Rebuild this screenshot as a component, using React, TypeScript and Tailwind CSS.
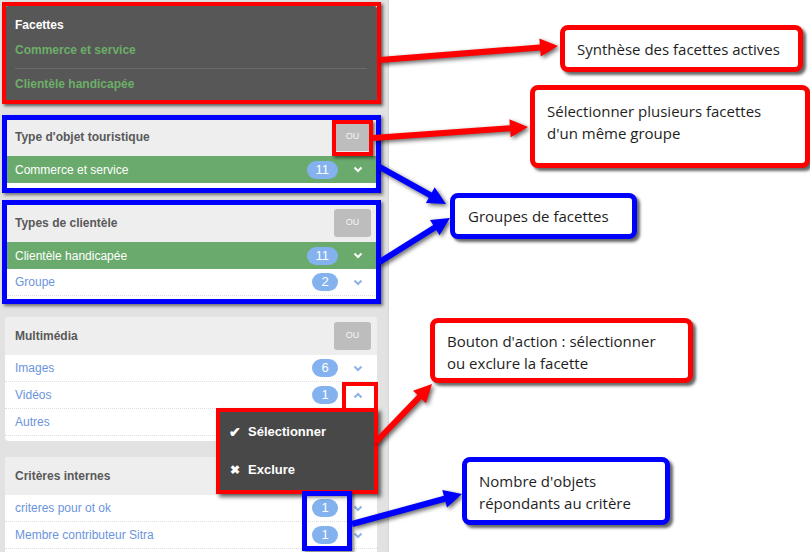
import React from "react";

type Item = { label: string; count?: number; active?: boolean; open?: boolean };
type Group = { title: string; items: Item[] };

const groups: Group[] = [
  { title: "Type d'objet touristique", items: [{ label: "Commerce et service", count: 11, active: true }] },
  {
    title: "Types de clientèle",
    items: [
      { label: "Clientèle handicapée", count: 11, active: true },
      { label: "Groupe", count: 2 },
    ],
  },
  {
    title: "Multimédia",
    items: [
      { label: "Images", count: 6 },
      { label: "Vidéos", count: 1, open: true },
      { label: "Autres" },
    ],
  },
  {
    title: "Critères internes",
    items: [
      { label: "criteres pour ot ok", count: 1 },
      { label: "Membre contributeur Sitra", count: 1 },
    ],
  },
];

function Chevron({ up, color }: { up?: boolean; color: string }) {
  return (
    <svg width="10" height="7" viewBox="0 0 10 7">
      <polyline
        points={up ? "1.5,5.5 5,2 8.5,5.5" : "1.5,1.5 5,5 8.5,1.5"}
        fill="none"
        stroke={color}
        strokeWidth="2"
      />
    </svg>
  );
}

function FacetRow({ item }: { item: Item }) {
  return (
    <div
      className={`h-[27px] flex items-center pl-[10px] text-[12px] ${
        item.active ? "bg-[#6aaa6c] text-white" : "text-[#6c94dc] border-b border-dotted border-[#dddddd]"
      }`}
    >
      <span className="flex-1">{item.label}</span>
      {item.count !== undefined && (
        <span className="h-[18px] min-w-[26px] px-[9px] rounded-full bg-[#84b2ee] text-white text-[13px] leading-[18px] text-center">
          {item.count}
        </span>
      )}
      {item.open !== undefined || item.count !== undefined ? (
        <span className="w-[39px] flex justify-center">
          <Chevron up={item.open} color={item.active ? "#ffffff" : "#8fb2e8"} />
        </span>
      ) : null}
    </div>
  );
}

function FacetGroup({ group }: { group: Group }) {
  return (
    <div className="w-[372px] bg-white rounded-[4px] pb-[5px] shrink-0">
      <div className="h-[38px] bg-[#eeeeee] rounded-t-[4px] flex items-center justify-between pl-[10px] pr-[6px]">
        <span className="text-[12px] font-bold text-[#595959]">{group.title}</span>
        <span className="w-[37px] h-[28px] rounded-[3px] bg-[#bdbdbd] text-[#f5f5f5] text-[9px] flex items-center justify-center">
          OU
        </span>
      </div>
      {group.items.map((item) => (
        <FacetRow key={item.label} item={item} />
      ))}
    </div>
  );
}

function arrow(x1: number, y1: number, x2: number, y2: number, w = 6, hl = 18, hw = 18) {
  const len = Math.hypot(x2 - x1, y2 - y1);
  const ux = (x2 - x1) / len;
  const uy = (y2 - y1) / len;
  const nx = -uy;
  const ny = ux;
  const bx = x2 - ux * hl;
  const by = y2 - uy * hl;
  const pts = [
    [x1 + (nx * w) / 2, y1 + (ny * w) / 2],
    [bx + (nx * w) / 2, by + (ny * w) / 2],
    [bx + (nx * hw) / 2, by + (ny * hw) / 2],
    [x2, y2],
    [bx - (nx * hw) / 2, by - (ny * hw) / 2],
    [bx - (nx * w) / 2, by - (ny * w) / 2],
    [x1 - (nx * w) / 2, y1 - (ny * w) / 2],
  ];
  return pts.map((p) => p.join(",")).join(" ");
}

const arrows = [
  { from: [380, 60], to: [558, 46], color: "#ff0000" },
  { from: [373, 138], to: [528, 127], color: "#ff0000" },
  { from: [378, 166], to: [446, 204], color: "#0000ff" },
  { from: [378, 263], to: [450, 218], color: "#0000ff" },
  { from: [376, 442], to: [432, 384], color: "#ff0000" },
  { from: [352, 524], to: [462, 494], color: "#0000ff" },
];

function Callout({ className, children }: { className: string; children: React.ReactNode }) {
  return (
    <div
      className={`absolute bg-white border-[5px] rounded-[8px] shadow-[3px_3px_3px_rgba(0,0,0,0.6)] text-[15px] leading-[22px] text-[#1e1e1e] font-['Open_Sans','Noto_Sans',sans-serif] ${className}`}
    >
      {children}
    </div>
  );
}

export default function App() {
  return (
    <div className="relative w-[810px] h-[552px] bg-white overflow-hidden flex font-['Liberation_Sans',Arial,sans-serif]">
      <div className="w-[389px] h-[552px] bg-[#e2e2e2] border-r border-[#d6d6d6] pt-[6px] pl-[5px] flex flex-col gap-[16px] overflow-hidden shrink-0">
        <div className="w-[372px] h-[96px] bg-[#575757] rounded-[3px] px-[10px] pt-[11px] shrink-0 text-[12px] font-bold">
          <div className="h-[16px] leading-[16px] text-white">Facettes</div>
          <div className="mt-[9px] h-[16px] leading-[16px] text-[#6cae68]">Commerce et service</div>
          <div className="mt-[10px] h-px bg-[#6b6b6b]" />
          <div className="mt-[7px] h-[16px] leading-[16px] text-[#6cae68]">Clientèle handicapée</div>
        </div>
        {groups.map((g) => (
          <FacetGroup key={g.title} group={g} />
        ))}
      </div>

      {/* dropdown of the "Vidéos" action button */}
      <div className="absolute left-[216px] top-[408px] w-[162px] h-[86px] bg-[#484848] border-4 border-[#ff0000] shadow-[3px_3px_4px_rgba(0,0,0,0.6)] text-white font-bold text-[13px]">
        <div className="flex items-center gap-[5px] pl-[9px] mt-[12px] h-[16px]">
          <span className="text-[14px] w-[14px] leading-[16px]">✔</span>
          <span>Sélectionner</span>
        </div>
        <div className="flex items-center gap-[6px] pl-[10px] mt-[22px] h-[16px]">
          <span className="text-[12px] w-[12px] leading-[16px]">✖</span>
          <span>Exclure</span>
        </div>
      </div>

      {/* annotation frames */}
      <div className="absolute left-[2px] top-[2px] w-[379px] h-[102px] border-4 border-[#ff0000] shadow-[2px_2px_3px_rgba(0,0,0,0.6)]" />
      <div className="absolute left-[332px] top-[120px] w-[41px] h-[36px] border-4 border-[#ff0000] shadow-[2px_2px_3px_rgba(0,0,0,0.5)]" />
      <div className="absolute left-[2px] top-[115px] w-[379px] h-[78px] border-[5px] border-[#0000ff] shadow-[2px_2px_3px_rgba(0,0,0,0.5)]" />
      <div className="absolute left-[2px] top-[200px] w-[379px] h-[104px] border-[5px] border-[#0000ff] shadow-[2px_2px_3px_rgba(0,0,0,0.5)]" />
      <div className="absolute left-[342px] top-[382px] w-[36px] h-[30px] border-4 border-b-0 border-[#ff0000]" />
      <div className="absolute left-[302px] top-[491px] w-[50px] h-[60px] border-[5px] border-[#0000ff] shadow-[2px_2px_3px_rgba(0,0,0,0.5)]" />

      <svg className="absolute left-0 top-0 pointer-events-none" width="810" height="552">
        {arrows.map((a, i) => (
          <polygon
            key={i}
            points={arrow(a.from[0], a.from[1], a.to[0], a.to[1])}
            fill={a.color}
            className="drop-shadow-[2px_2px_2px_rgba(0,0,0,0.6)]"
          />
        ))}
      </svg>

      <Callout className="left-[560px] top-[25px] w-[243px] h-[47px] border-[#ff0000] pl-[12px] flex items-center">
        Synthèse des facettes actives
      </Callout>
      <Callout className="left-[530px] top-[85px] w-[280px] h-[83px] border-[#ff0000] pl-[12px] pt-[10px]">
        Sélectionner plusieurs facettes
        <br />
        d'un même groupe
      </Callout>
      <Callout className="left-[450px] top-[193px] w-[187px] h-[46px] border-[#0000ff] pl-[13px] flex items-center">
        Groupes de facettes
      </Callout>
      <Callout className="left-[430px] top-[318px] w-[263px] h-[65px] border-[#ff0000] pl-[12px] pt-[7px]">
        Bouton d'action : sélectionner
        <br />
        ou exclure la facette
      </Callout>
      <Callout className="left-[462px] top-[457px] w-[208px] h-[68px] border-[#0000ff] pl-[12px] pt-[8px]">
        Nombre d'objets
        <br />
        répondants au critère
      </Callout>
    </div>
  );
}
